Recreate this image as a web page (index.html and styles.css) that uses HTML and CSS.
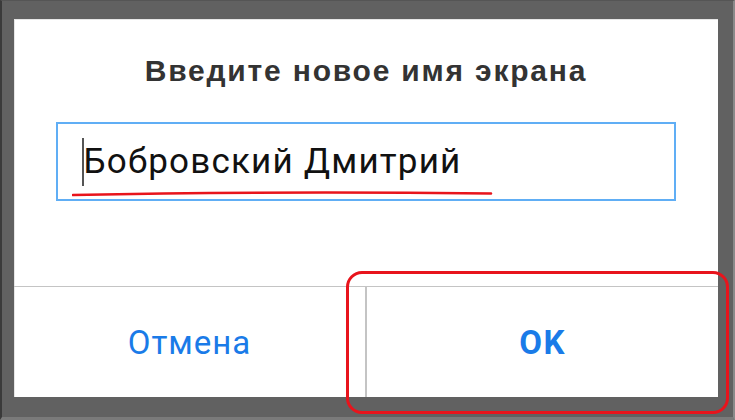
FILE: index.html
```html
<!DOCTYPE html>
<html lang="ru">
<head>
<meta charset="utf-8">
<link rel="stylesheet" href="styles.css">
</head>
<body>
<div class="frame">
  <div class="dialog">
    <div class="title">Введите новое имя экрана</div>
    <div class="field">
      <span class="caret"></span><span class="value">Бобровский Дмитрий</span>
    </div>
    <div class="actions">
      <div class="btn cancel">Отмена</div>
      <div class="btn ok">OK</div>
    </div>
  </div>
  <svg class="underline" width="430" height="8" viewBox="0 0 430 8">
    <path d="M1 5 Q 200 1 419 3.5" fill="none" stroke="#e8141c" stroke-width="2.6" stroke-linecap="round"/>
  </svg>
  <div class="highlight"></div>
</div>
</body>
</html>
```
FILE: styles.css
```css
html, body {
  margin: 0;
  padding: 0;
  background: #fff;
}
.frame {
  position: relative;
  width: 735px;
  height: 420px;
  box-sizing: border-box;
  background: #616161;
  border-left: 2px solid #3a3a3a;
  border-top: 1px solid #555;
  border-right: 2px solid #8a8a8a;
  border-bottom: 3px solid #7a7a7a;
  padding: 18px 15px 0 12px;
  font-family: Roboto, "Noto Sans", sans-serif;
}
.dialog {
  width: 704px;
  height: 378px;
  background: #fff;
  box-shadow: inset 1px 1px 0 #e6e6e6;
  display: flex;
  flex-direction: column;
}
.title {
  margin-top: 32px;
  text-align: center;
  font-family: "Liberation Sans", Arial, sans-serif;
  font-size: 30px;
  letter-spacing: 1.8px;
  font-weight: bold;
  color: #333;
  line-height: 40px;
}
.field {
  margin: 31px 0 0 42px;
  width: 620px;
  height: 79px;
  box-sizing: border-box;
  border: 2px solid #60aef5;
  display: flex;
  align-items: center;
  padding-left: 24px;
}
.caret {
  width: 1.5px;
  height: 48px;
  background: #555;
  margin-right: 0;
}
.value {
  font-size: 35px;
  letter-spacing: 1.2px;
  color: #111;
  line-height: 40px;
}
.actions {
  margin-top: auto;
  height: 110px;
  border-top: 1px solid #c4c4c4;
  display: flex;
}
.btn {
  flex: 1;
  display: flex;
  align-items: center;
  justify-content: center;
  font-size: 33px;
  letter-spacing: 1px;
  color: #1a7be8;
}
.cancel {
  border-right: 2px solid #c4c4c4;
}
.ok {
  font-weight: bold;
  letter-spacing: 1.5px;
}
.underline {
  position: absolute;
  left: 70px;
  top: 189px;
}
.highlight {
  position: absolute;
  left: 344px;
  top: 270px;
  width: 383px;
  height: 143px;
  box-sizing: border-box;
  border: 3px solid #e8141c;
  border-radius: 16px;
}
```
